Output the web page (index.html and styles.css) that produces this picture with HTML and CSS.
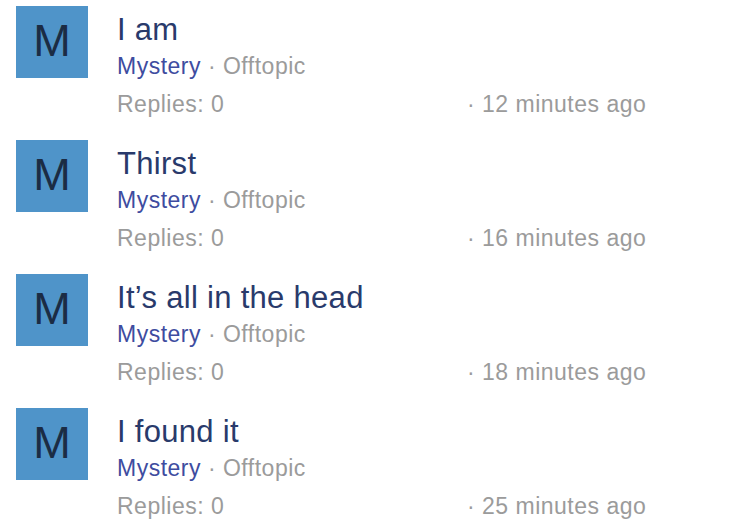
FILE: index.html
```html
<!DOCTYPE html>
<html lang="en">
<head>
  <meta charset="UTF-8" />
  <meta name="viewport" content="width=device-width, initial-scale=1.0" />
  <title>Topics</title>
  <link rel="stylesheet" href="styles.css">
</head>
<body>
  <!-- Lista de temas -->
  <ul class="topic-list">
    <li class="topic">
      <div class="avatar">M</div>
      <div class="topic-body">
        <h2 class="topic-title">I am</h2>
        <p class="topic-meta"><span class="topic-author">Mystery</span> · Offtopic</p>
        <div class="topic-footer">
          <span>Replies: 0</span>
          <span>· 12 minutes ago</span>
        </div>
      </div>
    </li>
    <li class="topic">
      <div class="avatar">M</div>
      <div class="topic-body">
        <h2 class="topic-title">Thirst</h2>
        <p class="topic-meta"><span class="topic-author">Mystery</span> · Offtopic</p>
        <div class="topic-footer">
          <span>Replies: 0</span>
          <span>· 16 minutes ago</span>
        </div>
      </div>
    </li>
    <li class="topic">
      <div class="avatar">M</div>
      <div class="topic-body">
        <h2 class="topic-title">It’s all in the head</h2>
        <p class="topic-meta"><span class="topic-author">Mystery</span> · Offtopic</p>
        <div class="topic-footer">
          <span>Replies: 0</span>
          <span>· 18 minutes ago</span>
        </div>
      </div>
    </li>
    <li class="topic">
      <div class="avatar">M</div>
      <div class="topic-body">
        <h2 class="topic-title">I found it</h2>
        <p class="topic-meta"><span class="topic-author">Mystery</span> · Offtopic</p>
        <div class="topic-footer">
          <span>Replies: 0</span>
          <span>· 25 minutes ago</span>
        </div>
      </div>
    </li>
  </ul>
</body>
</html>
```

FILE: styles.css
```css
/* Variables y reset */
:root {
  --color-avatar: #4f94c9;
  --color-avatar-text: #1b2c44;
  --color-title: #293a6b;
  --color-author: #3e4ca0;
  --color-muted: #9b9b9b;
  --font-base: "Helvetica Neue", Helvetica, "Liberation Sans", Arial, sans-serif;
}

* {
  margin: 0;
  padding: 0;
  box-sizing: border-box;
}

body {
  font-family: var(--font-base);
  background-color: #fff;
  overflow: hidden;
}

/* Lista */
.topic-list {
  list-style: none;
}

.topic {
  display: flex;
  gap: 29px;
  padding: 6px 16px 12px;
}

.avatar {
  flex: none;
  width: 72px;
  height: 72px;
  display: flex;
  align-items: center;
  justify-content: center;
  padding-bottom: 3px;
  background-color: var(--color-avatar);
  color: var(--color-avatar-text);
  font-size: 45px;
  line-height: 1;
}

.topic-body {
  flex: 1;
}

.topic-title {
  margin-top: 6px;
  font-size: 31px;
  font-weight: 400;
  line-height: 36px;
  letter-spacing: 0.3px;
  color: var(--color-title);
}

.topic-meta,
.topic-footer {
  font-size: 23px;
  line-height: 36px;
  letter-spacing: 0.5px;
  color: var(--color-muted);
}

.topic-author {
  color: var(--color-author);
}

.topic-footer {
  display: grid;
  grid-template-columns: 350px auto;
  margin-top: 2px;
}
```
